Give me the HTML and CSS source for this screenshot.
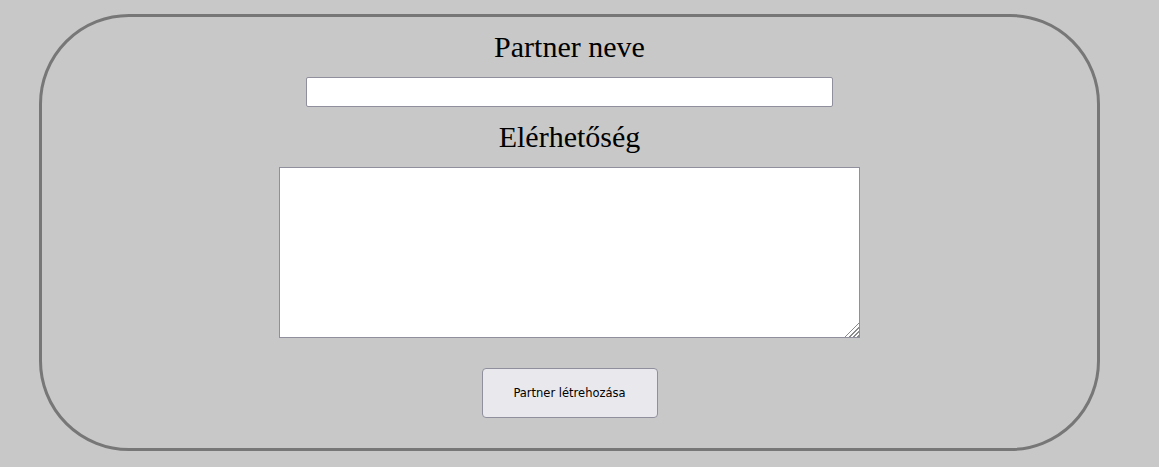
FILE: index.html
```html
<!DOCTYPE html>
<html lang="hu">
<head>
<meta charset="utf-8">
<link rel="stylesheet" href="styles.css">
</head>
<body>
<form class="card">
  <label class="label" for="name">Partner neve</label>
  <input class="name-input" id="name" type="text">
  <label class="label" for="contact">Elérhetőség</label>
  <textarea class="contact-input" id="contact"></textarea>
  <button class="submit" type="button">Partner létrehozása</button>
</form>
</body>
</html>
```
FILE: styles.css
```css
html, body {
  margin: 0;
  padding: 0;
  background: #c8c8c8;
}
body {
  padding: 14px 59px 0 39px;
  font-family: "Liberation Serif", "Times New Roman", serif;
}
.card {
  box-sizing: border-box;
  width: 1061px;
  height: 437px;
  border: 3px solid #777777;
  border-radius: 90px;
  display: flex;
  flex-direction: column;
  align-items: center;
  padding-top: 13px;
}
.label {
  font-size: 30px;
  line-height: 34px;
  color: #000;
}
.name-input {
  box-sizing: border-box;
  width: 527px;
  height: 30px;
  margin: 13px 0 13px;
  border: 1px solid #8f8f9d;
  border-radius: 2px;
  background: #fff;
  padding: 0;
}
.contact-input {
  box-sizing: border-box;
  width: 581px;
  height: 171px;
  margin-top: 13px;
  border: 1px solid #8f8f9d;
  border-radius: 0;
  background: #fff;
  resize: both;
  padding: 2px;
}
.contact-input::-webkit-resizer {
  background-color: #fff;
  background-image: linear-gradient(135deg,
    transparent 0 50%, #8a8a8a 50% 56%,
    transparent 56% 64%, #8a8a8a 64% 70%,
    transparent 70% 78%, #8a8a8a 78% 84%,
    transparent 84% 91%, #8a8a8a 91% 97%,
    transparent 97%);
}
.submit {
  box-sizing: border-box;
  width: 176px;
  height: 50px;
  margin-top: 30px;
  border: 1px solid #8f8f9d;
  border-radius: 4px;
  background: #e9e9ed;
  color: #000;
  font-family: "DejaVu Sans", Verdana, sans-serif;
  font-size: 11.5px;
  padding: 0;
}
```
